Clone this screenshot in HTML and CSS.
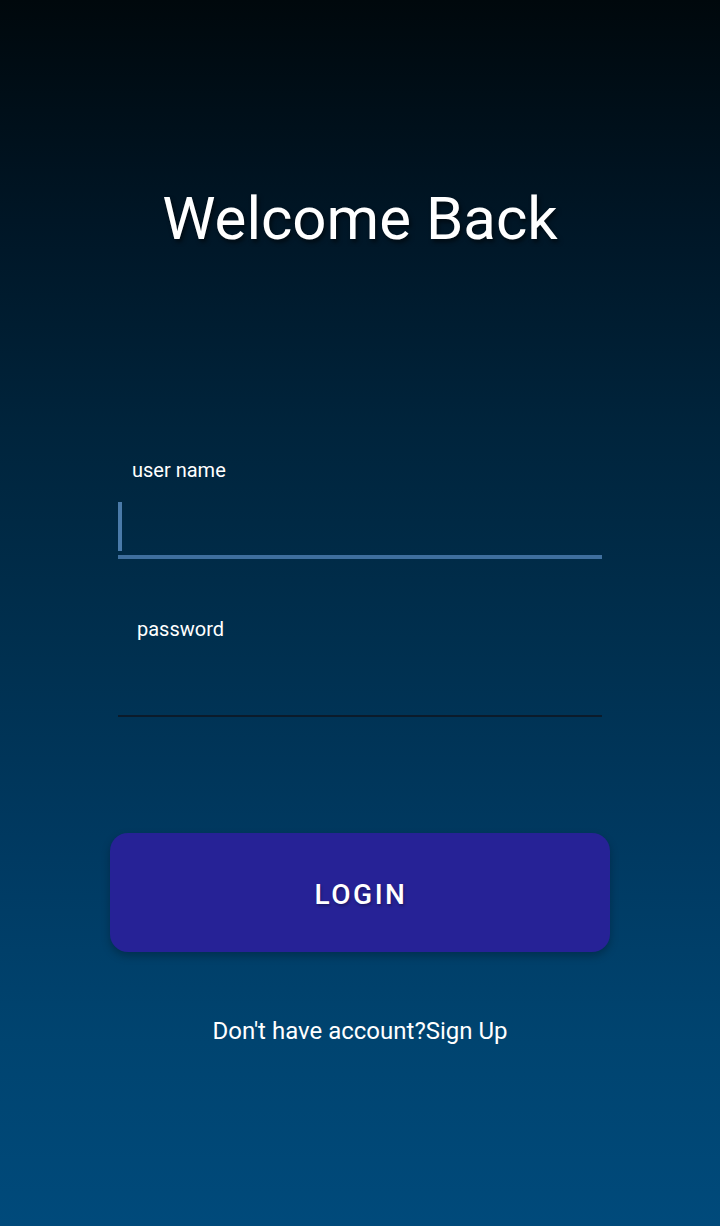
FILE: index.html
```html
<!DOCTYPE html>
<html lang="en">
<head>
<meta charset="utf-8">
<title>Welcome Back</title>
<link rel="stylesheet" href="styles.css">
</head>
<body>
<main class="screen">
  <h1 class="title">Welcome Back</h1>
  <form class="form">
    <div class="field">
      <label class="label label-user">user name</label>
      <div class="input input-active"><span class="cursor"></span></div>
    </div>
    <div class="field field-pass">
      <label class="label label-pass">password</label>
      <div class="input input-idle"></div>
    </div>
    <button type="button" class="login">LOGIN</button>
    <p class="signup">Don't have account?Sign Up</p>
  </form>
</main>
</body>
</html>
```

FILE: styles.css
```css
* { box-sizing: border-box; }
html, body {
  margin: 0;
  padding: 0;
  height: 100%;
}
body {
  font-family: Roboto, "Liberation Sans", sans-serif;
  color: #ffffff;
  background: linear-gradient(180deg, #00080c 0%, #001626 18%, #00243c 35%, #002f4e 52%, #003a62 70%, #004470 85%, #004a7b 100%);
  min-height: 1226px;
}
.screen {
  display: flex;
  flex-direction: column;
  align-items: center;
  padding-top: 184px;
}
.title {
  margin: 0;
  font-size: 60px;
  font-weight: 400;
  line-height: 70px;
  height: 70px;
  letter-spacing: 0;
  text-shadow: 2px 3px 4px rgba(0, 0, 0, 0.55);
}
.form {
  width: 500px;
  margin-top: 204px;
  display: flex;
  flex-direction: column;
  align-items: center;
}
.field {
  width: 484px;
  display: flex;
  flex-direction: column;
}
.label {
  font-size: 20px;
  line-height: 24px;
  height: 24px;
  color: #ffffff;
}
.label-user { padding-left: 14px; }
.label-pass { padding-left: 19px; }
.input {
  height: 77px;
  display: flex;
  align-items: flex-end;
}
.input-active {
  border-bottom: 4px solid #3f6f9e;
  padding-bottom: 4px;
}
.cursor {
  display: block;
  width: 4px;
  height: 49px;
  background: #4a7aa9;
}
.input-idle {
  height: 76px;
  border-bottom: 2px solid #0b1b2b;
}
.field-pass {
  margin-top: 58px;
}
.login {
  margin-top: 116px;
  width: 500px;
  height: 119px;
  border: none;
  border-radius: 18px;
  background: #262296;
  color: #ffffff;
  font-family: Roboto, "Liberation Sans", sans-serif;
  font-size: 28px;
  font-weight: 500;
  letter-spacing: 2.5px;
  padding: 4px 0 0 2px;
  box-shadow: 0 4px 8px rgba(0, 0, 0, 0.25);
  text-shadow: 1px 2px 3px rgba(0, 0, 0, 0.3);
}
.signup {
  margin: 65px 0 0;
  font-size: 24px;
  line-height: 28px;
  color: #ffffff;
}
```
